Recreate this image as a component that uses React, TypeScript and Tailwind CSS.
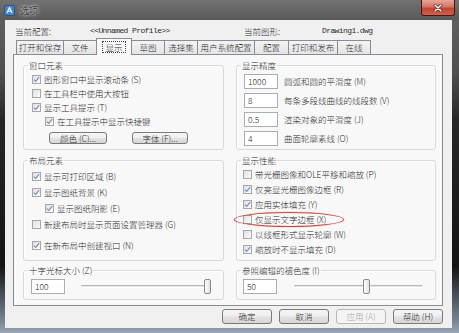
import React from 'react';

// Options dialog (显示 tab), Win7 Aero styling at a reduced scale.

const TABS = [
  { label: '打开和保存', w: 'w-[48px]' },
  { label: '文件', w: 'w-[34px]' },
  { label: '显示', w: 'w-[36px]', active: true },
  { label: '草图', w: 'w-[34px]' },
  { label: '选择集', w: 'w-[34px]' },
  { label: '用户系统配置', w: 'w-[58px]' },
  { label: '配置', w: 'w-[35px]' },
  { label: '打印和发布', w: 'w-[50px]' },
  { label: '在线', w: 'w-[34px]' },
];

const PRECISION = [
  { value: '1000', label: '圆弧和圆的平滑度', k: 'M' },
  { value: '8', label: '每条多段线曲线的线段数', k: 'V' },
  { value: '0.5', label: '渲染对象的平滑度', k: 'J' },
  { value: '4', label: '曲面轮廓素线', k: 'O' },
];

const PERFORMANCE = [
  { label: '带光栅图像和OLE平移和缩放', k: 'P', checked: false },
  { label: '仅亮显光栅图像边框', k: 'R', checked: true },
  { label: '应用实体填充', k: 'Y', checked: true },
  { label: '仅显示文字边框', k: 'X', checked: false, marked: true },
  { label: '以线框形式显示轮廓', k: 'W', checked: false },
  { label: '缩放时不显示填充', k: 'D', checked: true },
];

// mnemonic suffix, underline hidden like Win7 does until Alt is pressed
const Mn: React.FC<{ k?: string }> = ({ k }) => (k ? <>{` (${k})`}</> : null);

const CheckRow: React.FC<{ label: string; k?: string; checked?: boolean; className?: string }> = ({
  label,
  k,
  checked,
  className = '',
}) => (
  <div className={`flex items-center ${className}`}>
    <span className="flex size-[9px] shrink-0 items-center justify-center border border-[#a4a7ab] bg-[linear-gradient(135deg,#dfe1e3,#fbfbfb)]">
      {checked ? (
        <svg width="7" height="7" viewBox="0 0 7 7">
          <path d="M0.8 3.6 L2.7 5.4 L6.2 1.2" fill="none" stroke="#7491b8" strokeWidth="1.2" />
        </svg>
      ) : null}
    </span>
    <span className="ml-[3px] whitespace-nowrap">
      {label}
      <Mn k={k} />
    </span>
  </div>
);

const Field: React.FC<{ value: string }> = ({ value }) => (
  <div className="flex h-[15px] w-[34px] shrink-0 items-center border border-[#abadb3] bg-white pl-[3px] text-[8.5px] leading-none">
    {value}
  </div>
);

const Btn: React.FC<{ children: React.ReactNode; className?: string; disabled?: boolean }> = ({
  children,
  className = '',
  disabled,
}) => (
  <div
    className={`flex items-center justify-center rounded-[3px] border whitespace-nowrap ${
      disabled
        ? 'border-[#b8b8b8] bg-[#f4f4f4] text-[#a8a8a8]'
        : 'border-[#7a7a7a] bg-[linear-gradient(180deg,#f6f6f6_0%,#eeeeee_48%,#e2e2e2_52%,#d6d6d6_100%)]'
    } ${className}`}
  >
    {children}
  </div>
);

const Slider: React.FC<{ value: number; max: number; className?: string }> = ({ value, max, className = '' }) => (
  <div className={`relative h-[15px] ${className}`}>
    <div className="absolute left-0 right-[3px] top-[6px] h-[3px] border-t border-b border-t-[#b8b8b8] border-b-white bg-[#e6e6e6]" />
    <div
      className="absolute top-0 h-[15px] w-[7px] rounded-[2px] border border-[#8a8a8a] bg-[linear-gradient(90deg,#fdfdfd,#e2e2e2)]"
      style={{ left: `calc((100% - 7px) * ${value / max})` }}
    />
  </div>
);

const Group: React.FC<{ title: React.ReactNode; className?: string; children: React.ReactNode }> = ({
  title,
  className = '',
  children,
}) => (
  <fieldset className={`rounded-[3px] border border-[#d6dade] shadow-[inset_1px_1px_0_#ffffff] ${className}`}>
    <legend className="ml-[4px] px-[1px] text-[8.5px] leading-[12px]">{title}</legend>
    {children}
  </fieldset>
);

export default function App() {
  return (
    <div className="flex h-[333px] w-[459px] flex-col overflow-hidden bg-[linear-gradient(180deg,#646464_0%,#505050_22%,#262626_36%,#141414_80%,#7b8a99_97%,#9aa8b5_100%)] font-['Noto_Sans_CJK_SC','Noto_Sans',sans-serif] text-[8.5px] font-light text-[#2b2b2b]">
      {/* title bar */}
      <div className="flex h-[20px] shrink-0 items-center bg-[linear-gradient(180deg,#727272,#595959)]">
        <svg className="ml-[4px]" width="11" height="11" viewBox="0 0 11 11">
          <rect x="0.5" y="0.5" width="10" height="10" rx="1.5" fill="#4a82c4" stroke="#2a5286" />
          <path d="M3 8 L5.5 2.5 L8 8" fill="none" stroke="#e8f2ff" strokeWidth="1.3" />
          <path d="M4 6.2 H7" stroke="#e8f2ff" strokeWidth="1" />
        </svg>
        <span className="ml-[5px] text-[9px] leading-none text-[#111] [text-shadow:0_0_5px_#fff,0_0_3px_#fff]">选项</span>
        <div className="mr-[4px] ml-auto flex h-[16px] w-[34px] items-center justify-center self-start rounded-b-[3px] border border-t-0 border-[#4a1410] bg-[linear-gradient(180deg,#e6a597_0%,#d47666_45%,#c24431_55%,#d0624c_100%)]">
          <svg width="10" height="8" viewBox="0 0 10 8">
            <path d="M2 1 L8 7 M8 1 L2 7" stroke="#3b0d08" strokeWidth="2.6" strokeLinecap="round" />
            <path d="M2 1 L8 7 M8 1 L2 7" stroke="#ffffff" strokeWidth="1.5" strokeLinecap="round" />
          </svg>
        </div>
      </div>

      {/* client area */}
      <div className="ml-[5px] mr-[7px] flex h-[308px] shrink-0 flex-col bg-[#f0f0f0]">
        <div className="flex h-[18px] items-center pt-[4px] pl-[10px]">
          <span className="w-[75px]">当前配置:</span>
          <span className="w-[154px] font-['Liberation_Mono',monospace] text-[8px] tracking-[-0.6px]">
            &lt;&lt;Unnamed Profile&gt;&gt;
          </span>
          <span className="w-[78px]">当前图形:</span>
          <span className="font-['Liberation_Mono',monospace] text-[8px] tracking-[-0.6px]">Drawing1.dwg</span>
        </div>

        {/* tabs */}
        <div className="relative z-10 flex h-[16px] items-end pl-[11px]">
          {TABS.map((t, i) =>
            t.active ? (
              <div
                key={t.label}
                className={`-ml-px -mb-px flex h-[17px] ${t.w} items-center justify-center border border-b-0 border-[#898c95] bg-[#f8f8f8]`}
              >
                <span className="border border-dotted border-[#444] px-[2px] leading-[10px]">{t.label}</span>
              </div>
            ) : (
              <div
                key={t.label}
                className={`${i === 0 ? '' : '-ml-px'} flex h-[14px] ${t.w} items-center justify-center border border-b-0 border-[#898c95] bg-[linear-gradient(180deg,#f3f3f3,#e4e4e4)] leading-none`}
              >
                {t.label}
              </div>
            ),
          )}
        </div>

        {/* tab page */}
        <div className="ml-[8px] flex h-[252px] w-[430px] gap-[12px] border border-[#898c95] bg-[#f8f8f8] pt-[4px] pr-[6px] pl-[9px]">
          {/* left column */}
          <div className="flex w-[201px] flex-col">
            <Group title="窗口元素" className="h-[91px] pt-[1px]">
              <CheckRow className="h-[14px] pl-[8px]" checked label="图形窗口中显示滚动条" k="S" />
              <CheckRow className="h-[14px] pl-[8px]" label="在工具栏中使用大按钮" />
              <CheckRow className="h-[14px] pl-[8px]" checked label="显示工具提示" k="T" />
              <CheckRow className="h-[14px] pl-[21px]" checked label="在工具提示中显示快捷键" />
              <div className="mt-[4px] flex pl-[25px]">
                <Btn className="h-[12px] w-[58px]">
                  颜色<Mn k="C" />...
                </Btn>
                <Btn className="ml-[25px] h-[12px] w-[56px]">
                  字体<Mn k="F" />...
                </Btn>
              </div>
            </Group>

            <Group title="布局元素" className="mt-[4px] h-[107px] pt-[2px]">
              <CheckRow className="h-[16px] pl-[8px]" checked label="显示可打印区域" k="B" />
              <CheckRow className="h-[16px] pl-[8px]" checked label="显示图纸背景" k="K" />
              <CheckRow className="h-[16px] pl-[21px]" checked label="显示图纸阴影" k="E" />
              <CheckRow className="h-[16px] pl-[8px]" label="新建布局时显示页面设置管理器" k="G" />
              <CheckRow className="mt-[5px] h-[16px] pl-[8px]" checked label="在新布局中创建视口" k="N" />
            </Group>

            <Group
              title={
                <>
                  十字光标大小<Mn k="Z" />
                </>
              }
              className="mt-[3px] h-[36px] pt-[3px]"
            >
              <div className="flex items-center pl-[7px]">
                <Field value="100" />
                <Slider value={100} max={100} className="ml-[16px] w-[130px]" />
              </div>
            </Group>
          </div>

          {/* right column */}
          <div className="flex w-[200px] flex-col">
            <Group title="显示精度" className="h-[91px] pt-[3px]">
              <div className="flex flex-col gap-[4px] pl-[7px]">
                {PRECISION.map((p) => (
                  <div key={p.label} className="flex h-[15px] items-center">
                    <Field value={p.value} />
                    <span className="ml-[6px] whitespace-nowrap">
                      {p.label}
                      <Mn k={p.k} />
                    </span>
                  </div>
                ))}
              </div>
            </Group>

            <Group title="显示性能" className="mt-[4px] h-[107px] pt-[1px]">
              {PERFORMANCE.map((p) => (
                <div key={p.label} className="relative">
                  <CheckRow className="h-[15px] pl-[6px]" checked={p.checked} label={p.label} k={p.k} />
                  {p.marked ? (
                    <span className="pointer-events-none absolute top-0 left-[-3px] h-[15px] w-[110px] rounded-[50%] border-[1.5px] border-[#c9463d] shadow-[0_0_1px_#c9463d]" />
                  ) : null}
                </div>
              ))}
            </Group>

            <Group
              title={
                <>
                  参照编辑的褪色度<Mn k="I" />
                </>
              }
              className="mt-[3px] h-[36px] pt-[3px]"
            >
              <div className="flex items-center pl-[6px]">
                <Field value="50" />
                <Slider value={50} max={90} className="ml-[17px] w-[131px]" />
              </div>
            </Group>
          </div>
        </div>

        {/* dialog buttons */}
        <div className="mt-[3px] flex justify-end gap-[7px] pr-[9px]">
          <Btn className="h-[15px] w-[50px]">确定</Btn>
          <Btn className="h-[15px] w-[50px]">取消</Btn>
          <Btn disabled className="h-[15px] w-[50px]">
            应用<Mn k="A" />
          </Btn>
          <Btn className="h-[15px] w-[50px]">
            帮助<Mn k="H" />
          </Btn>
        </div>
      </div>
    </div>
  );
}
